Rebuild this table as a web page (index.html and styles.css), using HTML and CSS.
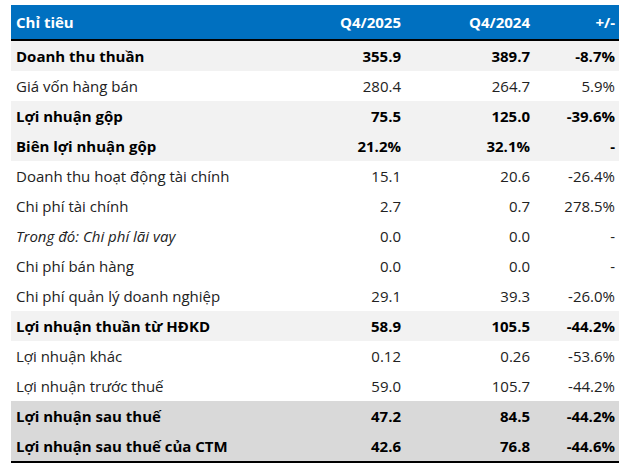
FILE: index.html
```html
<!DOCTYPE html>
<html lang="vi">
<head>
<meta charset="utf-8">
<link rel="stylesheet" href="styles.css">
</head>
<body>
<div class="wrap">
<table class="fin">
  <colgroup>
    <col class="c-name"><col class="c-a"><col class="c-b"><col class="c-d">
  </colgroup>
  <thead>
    <tr><th class="name">Chỉ tiêu</th><th>Q4/2025</th><th>Q4/2024</th><th class="last">+/-</th></tr>
  </thead>
  <tbody>
    <tr class="b hl"><td class="name">Doanh thu thuần</td><td>355.9</td><td>389.7</td><td class="last">-8.7%</td></tr>
    <tr><td class="name">Giá vốn hàng bán</td><td>280.4</td><td>264.7</td><td class="last">5.9%</td></tr>
    <tr class="b hl"><td class="name">Lợi nhuận gộp</td><td>75.5</td><td>125.0</td><td class="last">-39.6%</td></tr>
    <tr class="b hl"><td class="name">Biên lợi nhuận gộp</td><td>21.2%</td><td>32.1%</td><td class="last">-</td></tr>
    <tr><td class="name">Doanh thu hoạt động tài chính</td><td>15.1</td><td>20.6</td><td class="last">-26.4%</td></tr>
    <tr><td class="name">Chi phí tài chính</td><td>2.7</td><td>0.7</td><td class="last">278.5%</td></tr>
    <tr><td class="name it">Trong đó: Chi phí lãi vay</td><td>0.0</td><td>0.0</td><td class="last">-</td></tr>
    <tr><td class="name">Chi phí bán hàng</td><td>0.0</td><td>0.0</td><td class="last">-</td></tr>
    <tr><td class="name">Chi phí quản lý doanh nghiệp</td><td>29.1</td><td>39.3</td><td class="last">-26.0%</td></tr>
    <tr class="b hl"><td class="name">Lợi nhuận thuần từ HĐKD</td><td>58.9</td><td>105.5</td><td class="last">-44.2%</td></tr>
    <tr><td class="name">Lợi nhuận khác</td><td>0.12</td><td>0.26</td><td class="last">-53.6%</td></tr>
    <tr><td class="name">Lợi nhuận trước thuế</td><td>59.0</td><td>105.7</td><td class="last">-44.2%</td></tr>
    <tr class="b dk"><td class="name">Lợi nhuận sau thuế</td><td>47.2</td><td>84.5</td><td class="last">-44.2%</td></tr>
    <tr class="b dk end"><td class="name">Lợi nhuận sau thuế của CTM</td><td>42.6</td><td>76.8</td><td class="last">-44.6%</td></tr>
  </tbody>
</table>
</div>
</body>
</html>
```
FILE: styles.css
```css
html, body { margin: 0; padding: 0; background: #fff; }
.wrap { padding: 5px 9px 0 11px; }
.fin {
  width: 608px;
  border-collapse: collapse;
  table-layout: fixed;
  font-family: "Open Sans", "Noto Sans", sans-serif;
  font-size: 15px;
  color: #222;
}
.c-name { width: 289px; }
.c-a { width: 106px; }
.c-b { width: 129px; }
.c-d { width: 84px; }
.fin th {
  background: #0070c0;
  color: #fff;
  font-weight: 700;
  height: 35px;
  padding: 0 5px 0 0;
  text-align: right;
  border-bottom: 2px solid #000;
  box-sizing: border-box;
}
.fin td {
  height: 30px;
  padding: 0 5px 0 0;
  text-align: right;
  font-weight: 400;
  white-space: nowrap;
}
.fin .name { text-align: left; padding-left: 5px; }
.fin .last { padding-right: 4px; }
.fin .it { font-style: italic; }
.fin tr.b td { font-weight: 700; color: #000; }
.fin tr.hl td { background: #f2f2f2; }
.fin tr.dk td { background: #d9d9d9; }
.fin tr.end td { border-bottom: 2px solid #000; }
```
